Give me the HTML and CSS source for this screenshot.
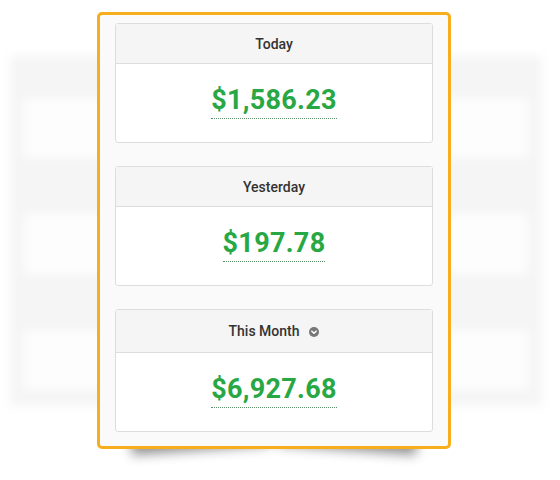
FILE: index.html
```html
<!DOCTYPE html>
<html lang="en">
<head>
    <meta charset="UTF-8">
    <meta name="viewport" content="width=device-width, initial-scale=1.0">
    <title>Earnings</title>
    <link rel="stylesheet" href="styles.css">
</head>
<body>

<div class="stage">
    <!-- blurred copy of the dashboard behind the highlight -->
    <div class="ghost">
        <div class="ghost-row"><div class="ghost-box"></div><div class="ghost-box"></div></div>
        <div class="ghost-row"><div class="ghost-box"></div><div class="ghost-box"></div></div>
        <div class="ghost-row"><div class="ghost-box"></div><div class="ghost-box"></div></div>
    </div>

    <div class="frame">
        <div class="card">
            <div class="card-header">Today</div>
            <div class="card-body"><span class="amount">$1,586.23</span></div>
        </div>
        <div class="card">
            <div class="card-header">Yesterday</div>
            <div class="card-body"><span class="amount">$197.78</span></div>
        </div>
        <div class="card card-last">
            <div class="card-header">
                This Month
                <svg class="caret" width="10" height="10" viewBox="0 0 12 12">
                    <circle cx="6" cy="6" r="6" fill="#777"/>
                    <path d="M3.4 5 L6 7.6 L8.6 5" fill="none" stroke="#fff" stroke-width="1.8" stroke-linecap="round" stroke-linejoin="round"/>
                </svg>
            </div>
            <div class="card-body"><span class="amount">$6,927.68</span></div>
        </div>
    </div>
</div>

</body>
</html>
```

FILE: styles.css
```css
body {
    margin: 0;
    padding: 0;
    background-color: #fff;
    font-family: 'Roboto', 'Liberation Sans', sans-serif;
}

.stage {
    position: relative;
    z-index: 0;
    width: 560px;
    height: 480px;
    padding: 12px 0 0 97px;
    box-sizing: border-box;
    overflow: hidden;
}

.ghost {
    position: absolute;
    z-index: -2;
    left: 10px;
    top: 56px;
    width: 532px;
    height: 350px;
    background: #f5f5f5;
    padding: 42px 14px 0 14px;
    box-sizing: border-box;
    display: flex;
    flex-direction: column;
    gap: 56px;
    filter: blur(5px);
}

.ghost-row {
    display: flex;
    justify-content: space-between;
}

.ghost-box {
    width: 80px;
    height: 60px;
    background: #fdfdfd;
}

.frame {
    position: relative;
    width: 354px;
    height: 437px;
    box-sizing: border-box;
    border: 3px solid #f6ae1c;
    border-radius: 5px;
    background: #fafafa;
    padding: 8px 15px 0 15px;
}

/* curled shadow under the frame */
.frame::before, .frame::after {
    content: "";
    position: absolute;
    z-index: -1;
    bottom: 12px;
    width: 40%;
    height: 24px;
    box-shadow: 0 16px 12px rgba(0, 0, 0, 0.45);
}

.frame::before {
    left: 30px;
    transform: rotate(-4deg);
}

.frame::after {
    right: 30px;
    transform: rotate(4deg);
}

.card {
    background: #fff;
    border: 1px solid #ddd;
    border-radius: 3px;
    margin-bottom: 23px;
}

.card-header {
    height: 39px;
    background: #f5f5f5;
    border-bottom: 1px solid #ddd;
    display: flex;
    justify-content: center;
    align-items: center;
    gap: 10px;
    font-size: 14px;
    font-weight: 500;
    color: #333;
}

.card-last .card-header {
    height: 42px;
}

.card-body {
    height: 78px;
    display: flex;
    justify-content: center;
    align-items: center;
}

.amount {
    font-size: 27px;
    font-weight: 700;
    color: #28a745;
    letter-spacing: 0.3px;
    line-height: 27px;
    padding-bottom: 4px;
    border-bottom: 1px dotted #5f8f6a;
}

.caret {
    margin-top: 2px;
}
```
